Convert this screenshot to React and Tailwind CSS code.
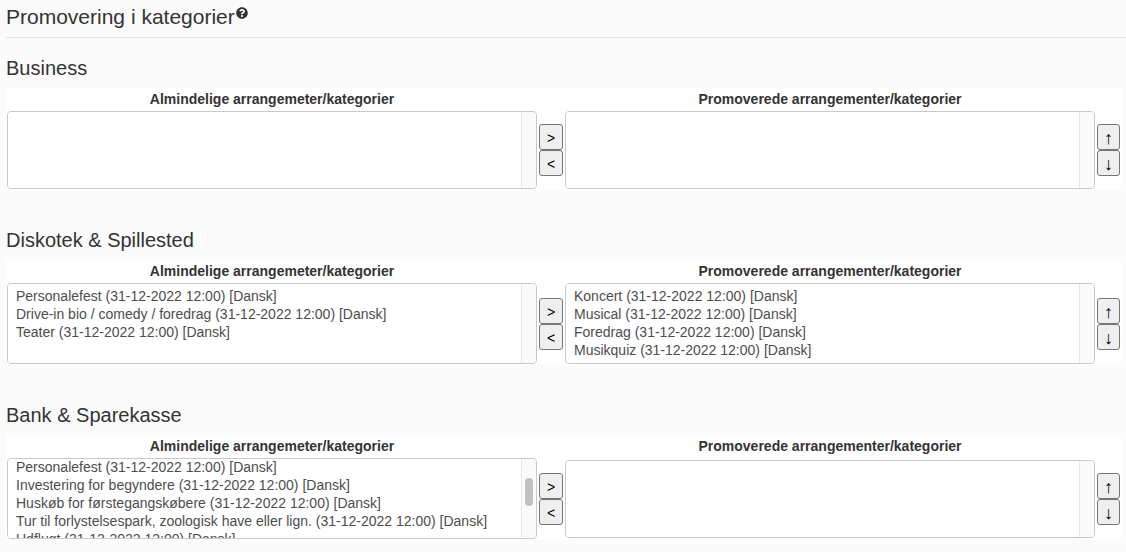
import { useEffect, useRef } from "react";
import { FaQuestionCircle } from "react-icons/fa";

const sections = [
  {
    id: "business",
    title: "Business",
    normal: [],
    promoted: [],
  },
  {
    id: "diskotek",
    title: "Diskotek & Spillested",
    normal: [
      "Personalefest (31-12-2022 12:00) [Dansk]",
      "Drive-in bio / comedy / foredrag (31-12-2022 12:00) [Dansk]",
      "Teater (31-12-2022 12:00) [Dansk]",
    ],
    promoted: [
      "Koncert (31-12-2022 12:00) [Dansk]",
      "Musical (31-12-2022 12:00) [Dansk]",
      "Foredrag (31-12-2022 12:00) [Dansk]",
      "Musikquiz (31-12-2022 12:00) [Dansk]",
    ],
  },
  {
    id: "bank",
    title: "Bank & Sparekasse",
    normal: [
      "Personalefest (31-12-2022 12:00) [Dansk]",
      "Investering for begyndere (31-12-2022 12:00) [Dansk]",
      "Huskøb for førstegangskøbere (31-12-2022 12:00) [Dansk]",
      "Tur til forlystelsespark, zoologisk have eller lign. (31-12-2022 12:00) [Dansk]",
      "Udflugt (31-12-2022 12:00) [Dansk]",
    ],
    promoted: [],
    scroll: 4,
  },
];

const ListBox = ({ id, items, scroll = 0 }) => {
  const ref = useRef(null);

  useEffect(() => {
    ref.current.scrollTop = scroll;
  }, [scroll]);

  return (
    <div
      className={`flex min-w-0 overflow-hidden rounded-[4px] border border-[#c8c8c8] bg-white ${
        items.length ? "h-[81px]" : "h-[78px]"
      }`}
    >
      <select
        id={id}
        ref={ref}
        multiple
        className="h-full min-w-0 flex-1 appearance-none overflow-y-auto bg-white px-2 py-1 text-sm text-[#4d4d4d] outline-none [scrollbar-width:none]"
      >
        {items.map((item) => (
          <option key={item} className="h-[18px] min-h-0 p-0 leading-[18px]">
            {item}
          </option>
        ))}
      </select>
      {/* scroll track */}
      <div className="w-[15px] border-l border-[#e8e8e8] bg-[#fafafa] px-[3px] pt-[19px]">
        {scroll > 0 && <div className="h-7 w-2 rounded-full bg-[#c1c1c1]" />}
      </div>
    </div>
  );
};

const ButtonPair = ({ buttons, large }) => (
  <div className="flex flex-col">
    {buttons.map(([symbol, label]) => (
      <button
        key={label}
        type="button"
        aria-label={label}
        className={`flex h-[26px] w-full items-center justify-center rounded-[3px] border border-[#767676] bg-[#efefef] pt-0.5 leading-6 text-black hover:bg-[#e5e5e5] ${
          large ? "text-lg" : "text-sm"
        }`}
      >
        {symbol}
      </button>
    ))}
  </div>
);

const Section = ({ id, title, normal, promoted, scroll }) => (
  <section className="mb-10">
    <h3 className="mb-2.5 text-xl leading-5">{title}</h3>
    <div className="mr-[5px] grid grid-cols-[minmax(0,1fr)_24px_minmax(0,1fr)_23px] items-center gap-0.5 bg-white p-px">
      <label
        htmlFor={`${id}-normal`}
        className="text-center text-sm leading-5 font-bold"
      >
        Almindelige arrangemeter/kategorier
      </label>
      <span />
      <label
        htmlFor={`${id}-promoted`}
        className="text-center text-sm leading-5 font-bold"
      >
        Promoverede arrangementer/kategorier
      </label>
      <span />

      <ListBox id={`${id}-normal`} items={normal} scroll={scroll} />
      <ButtonPair
        buttons={[
          [">", "Tilføj"],
          ["<", "Fjern"],
        ]}
      />
      <ListBox id={`${id}-promoted`} items={promoted} />
      <ButtonPair
        large
        buttons={[
          ["↑", "Flyt op"],
          ["↓", "Flyt ned"],
        ]}
      />
    </div>
  </section>
);

const App = () => {
  return (
    <main className="min-h-screen bg-[#fbfbfb] pl-1.5 font-['Liberation_Sans',Arial,sans-serif] text-[#333]">
      <h2 className="mb-5 flex items-start border-b border-[#e5e5e5] pt-[7px] pb-2.5 text-[21px] leading-5">
        Promovering i kategorier
        <FaQuestionCircle className="ml-px size-3" />
      </h2>
      {sections.map((section) => (
        <Section key={section.id} {...section} />
      ))}
    </main>
  );
};

export default App;
